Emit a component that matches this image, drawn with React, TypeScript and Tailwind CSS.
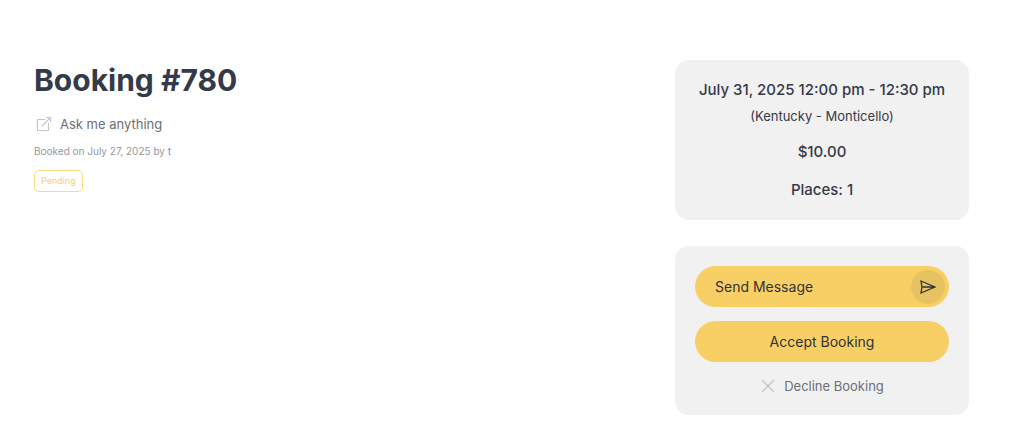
interface SummaryProps {
  date: string
  location: string
  price: string
  places: number
}

const ExternalIcon = () => (
  <svg className="size-4 text-[#c3c6d1]" viewBox="0 0 16 16" fill="none" stroke="currentColor" strokeWidth="1.2" aria-hidden="true">
    <path d="M9 3.5H1.5v11h11V7" />
    <path d="M10 1.5h4.5V6M14.5 1.5L6 10" />
  </svg>
)

const SendIcon = () => (
  <svg className="size-4" viewBox="0 0 16 16" fill="none" stroke="currentColor" strokeWidth="1.3" aria-hidden="true">
    <path d="M1 2l14 6-14 6 1-6-1-6zM2 8h12" />
  </svg>
)

const CloseIcon = () => (
  <svg className="size-4 text-[#c3c6d1]" viewBox="0 0 16 16" fill="none" stroke="currentColor" strokeWidth="1.3" aria-hidden="true">
    <path d="M2 2l12 12M14 2L2 14" />
  </svg>
)

const Summary = ({ date, location, price, places }: SummaryProps) => (
  <section className="rounded-[14px] bg-[#f1f1f1] px-5 py-4 text-center text-[15px] leading-7 font-medium text-[#343a48]">
    <p className="whitespace-nowrap">{date}</p>
    <p className="text-[13px] leading-6 font-normal">({location})</p>
    <p className="mt-2.5">{price}</p>
    <p className="mt-2.5">Places: {places}</p>
  </section>
)

const Actions = () => (
  <section className="flex flex-col items-stretch rounded-[14px] bg-[#f1f1f1] px-5 pt-5 pb-[19px] text-sm text-[#2f3338]">
    <button type="button" className="flex h-[41px] items-center justify-between rounded-full bg-[#f8cf65] pr-1 pl-5">
      Send Message
      <span className="flex size-[34px] items-center justify-center rounded-full bg-[#e7c261]">
        <SendIcon />
      </span>
    </button>
    <button type="button" className="mt-3.5 h-[41px] rounded-full bg-[#f8cf65]">
      Accept Booking
    </button>
    <button type="button" className="mt-3.5 flex items-center justify-center gap-2 text-[13px] leading-5 text-[#6b6f7b]">
      <CloseIcon />
      Decline Booking
    </button>
  </section>
)

export default function App() {
  return (
    <main className="flex items-start justify-between bg-white pt-[60px] pr-[55px] pb-[22px] pl-[34px] font-[Inter,sans-serif]">
      <div>
        <h1 className="text-[30px] leading-10 font-bold text-[#343a48]">Booking #780</h1>
        <a href="#listing" className="mt-3.5 ml-0.5 flex items-center gap-2 text-[13px] leading-5 text-[#6b6f7b]">
          <ExternalIcon />
          Ask me anything
        </a>
        <p className="mt-2 text-[10px] leading-[18px] text-[#96989e]">
          Booked on July 27, 2025 by <a href="#user" className="text-[#3d9be9]">t</a>
        </p>
        <div className="mt-2.5 flex">
          <span className="rounded-[5px] border border-[#fadb84] px-1.5 text-[9px] leading-5 text-[#f8cf65]">Pending</span>
        </div>
      </div>
      <aside className="flex w-[294px] flex-col gap-[26px]">
        <Summary date="July 31, 2025 12:00 pm - 12:30 pm" location="Kentucky - Monticello" price="$10.00" places={1} />
        <Actions />
      </aside>
    </main>
  )
}
